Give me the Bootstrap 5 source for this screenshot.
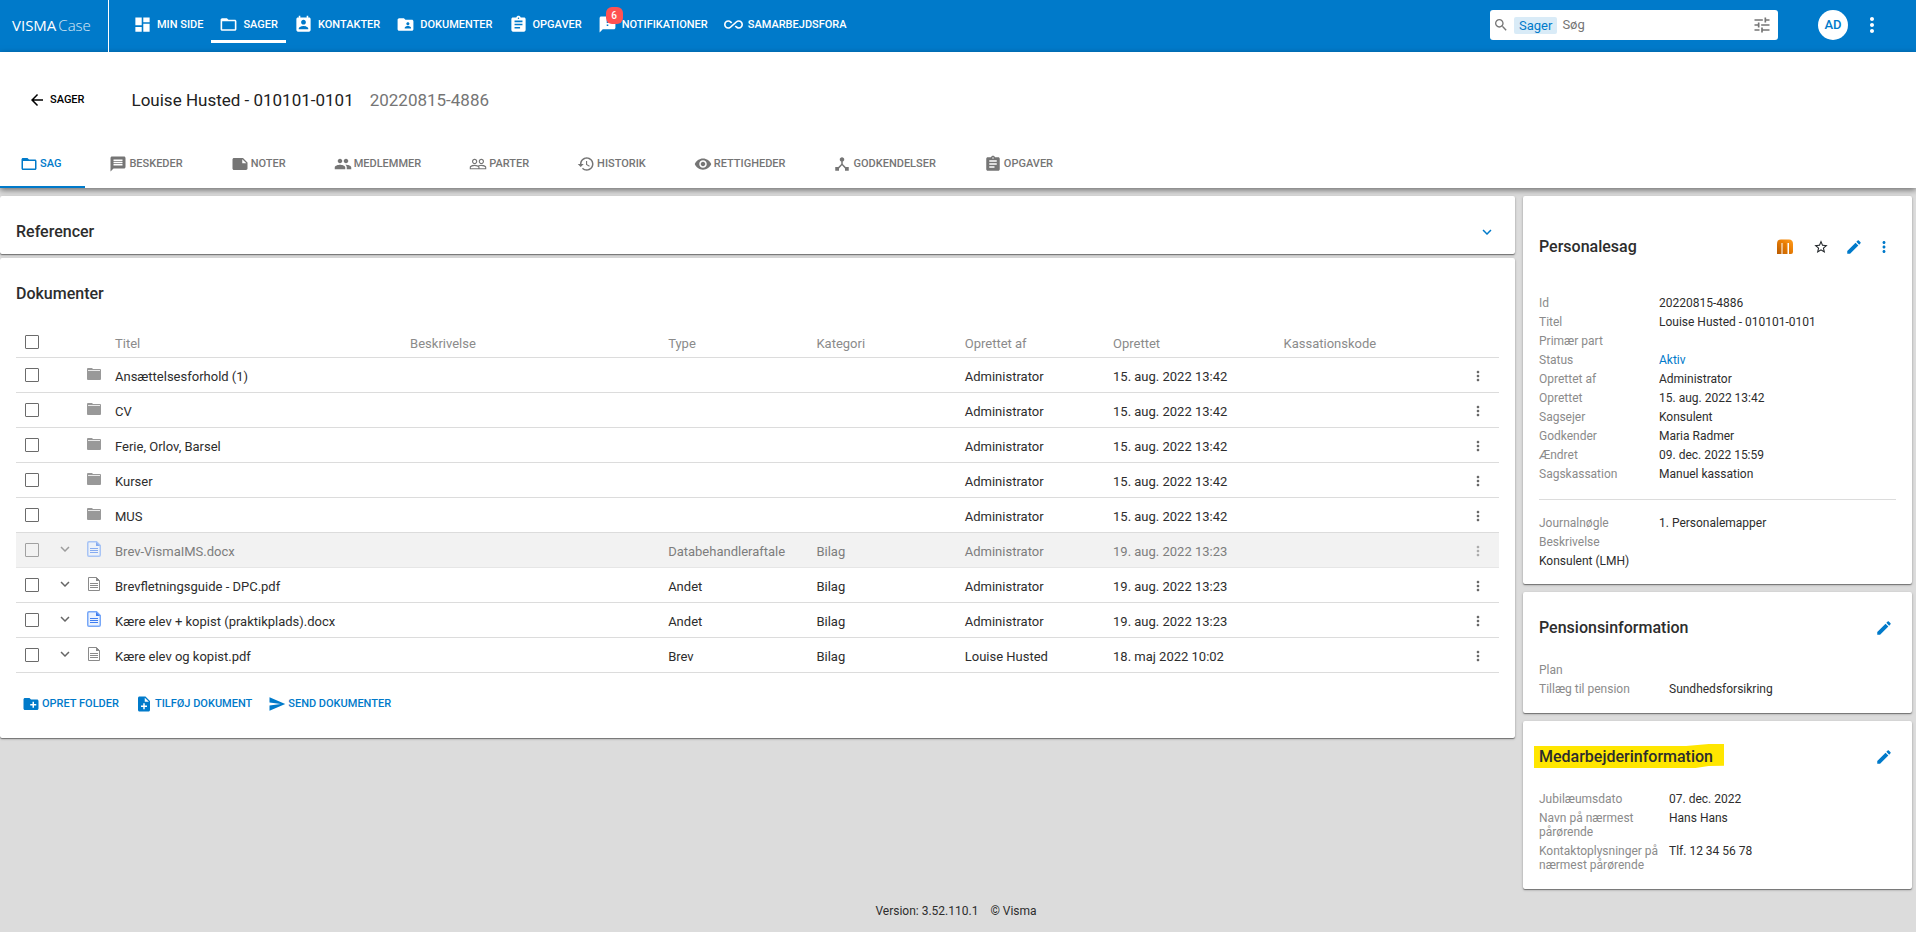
<!DOCTYPE html>
<html lang="da">
<head>
<meta charset="utf-8">
<meta name="viewport" content="width=device-width, initial-scale=1">
<title>Visma Case</title>
<link href="https://cdn.jsdelivr.net/npm/bootstrap@5.3.0/dist/css/bootstrap.min.css" rel="stylesheet">
<style>
:root { --brand: #007aca; --ink: #2d2d2d; --muted: #8b8b8b; --line: #dcdcdc; }
body { font-family: Roboto, "Liberation Sans", sans-serif; font-size: 13px; line-height: 18px; color: var(--ink); background: #dcdcdc; }
button { font: inherit; color: inherit; background: none; border: 0; padding: 0; }
.ico { width: 18px; height: 18px; fill: currentColor; flex: none; display: block; }
.ico-19 { width: 19px; height: 19px; }
.ico-20 { width: 20px; height: 20px; }
.ico-24 { width: 24px; height: 24px; }
.ico-16 { width: 16px; height: 16px; }
.ico-folder { width: 28px; height: 12px; }
.ico-file { width: 28px; height: 16px; }
.caps { font-size: 11px; font-weight: 500; text-transform: uppercase; text-decoration: none; white-space: nowrap; }
.text-brand { color: var(--brand); }

.topbar { background: var(--brand); height: 52px; }
.topbar .tools { padding: 10px 32px 0 0; }
.logo { width: 109px; height: 52px; border-right: 1px solid #fff; color: #fff; text-decoration: none; font: 400 15px/50px "Open Sans", sans-serif; padding-left: 12px; }
.logo span { font-weight: 300; opacity: .85; margin-left: 2px; }
.mainnav { padding-left: 16px; }
.mainnav a { color: #fff; height: 43px; padding: 9px 8px 0; gap: 5px; border-bottom: 3px solid transparent; position: relative; }
.mainnav a.active { border-color: #fff; }
.count { position: absolute; left: 16px; top: 7px; width: 17px; height: 17px; border-radius: 6px; background: #ff5252; font-size: 10px; line-height: 17px; text-align: center; }
.searchbox { width: 288px; height: 30px; background: #fff; border-radius: 3px; padding: 0 6px 0 3px; color: #757575; }
.searchbox .chip { background: #d9ebf7; color: var(--brand); border-radius: 2px; height: 17px; line-height: 17px; padding: 0 5px; margin-left: 5px; }
.searchbox input { border: 0; outline: 0; background: none; min-width: 0; padding: 0 5px; font-size: 13px; }
.searchbox input::placeholder { color: #757575; opacity: 1; }
.avatar { width: 30px; height: 30px; border-radius: 50%; background: #fff; color: var(--brand); font-size: 13px; font-weight: 500; margin: 0 12px 0 40px; }

.casehead { background: #fff; box-shadow: 0 2px 6px rgba(0,0,0,.5); }
.casehead .titlerow { height: 86px; padding: 10px 28px 0; }
.casehead h1 { font-size: 17px; line-height: 22px; font-weight: 400; margin: 0 0 0 47px; color: #212121; }
.casehead .caseno { font-size: 17px; line-height: 22px; color: #757575; margin-left: 16px; }
.tabs { height: 50px; }
.tabs a { color: #757575; padding: 4px 24px 0; gap: 2px; border-bottom: 2px solid transparent; }
.tabs a.active { color: var(--brand); padding-left: 20px; border-color: var(--brand); }

.board { display: grid; grid-template-columns: minmax(0, 1515fr) minmax(0, 389fr); column-gap: 8px; padding: 8px 4px 0 0; align-items: start; }
.panel { background: #fff; border-radius: 2px; box-shadow: 0 1px 1px rgba(0,0,0,.4), 0 1px 3px rgba(0,0,0,.2); padding: 0 16px 16px; }
.panel h2 { font-size: 16px; line-height: 20px; font-weight: 500; margin: 0; }
.panel-folded { padding-top: 26px; padding-bottom: 12px; }
.panel-case { padding-top: 41px; }
.panel-case .panel-head { margin-bottom: 39px; }
.panel-info { padding-top: 26px; padding-bottom: 17px; }
.panel-info .panel-head { margin-bottom: 25px; }
.panel-docs h2 { padding: 26px 0 24px; }
.panel-tools { margin-right: 3px; }

.docs { table-layout: fixed; min-width: 1000px; width: 100%; border-collapse: collapse; }
.docs tr { height: 35px; border-bottom: 1px solid var(--line); }
.docs th, .docs td { padding: 4px 8px 0; vertical-align: middle; overflow: hidden; white-space: nowrap; text-overflow: ellipsis; }
.docs th { font-weight: 400; color: var(--muted); }
.docs thead tr { height: 29px; }
.docs .pick { padding: 0 0 0 9px; }
.docs .mark-cell { padding: 0 0 2px; }
.docs .menu-cell { padding: 2px 2px 0 0; }
.docs .checked-out { background: #f2f2f2; border-color: #e6e6e6; }
.docs .checked-out > * > * { opacity: .6; }
.docs .checked-out td { color: #7d7d7d; }
.c-pick { width: 40px; } .c-open { width: 24px; } .c-icon { width: 27px; } .c-menu { width: 40px; }
.c-title { width: 19.9%; } .c-desc { width: 17.4%; } .c-std { width: 10%; } .c-date { width: 11.5%; }
.tick { appearance: none; width: 14px; height: 14px; border: 1px solid #6b6b6b; border-radius: 1px; margin: 0; display: block; background: #fff; }
.checked-out .tick { background: transparent; }
.tick:checked { background: var(--brand); }
.grey { color: #999; }
.dim { color: #666; }
.actions { gap: 16px; padding: 22px 6px 9px; color: var(--brand); }
.actions button { gap: 2px; }

.facts { display: grid; grid-template-columns: 120px minmax(0, 1fr); row-gap: 5px; font-size: 12px; line-height: 14px; margin: 0; }
.facts.wide { grid-template-columns: 130px minmax(0, 1fr); }
.facts dt { font-weight: 400; color: var(--muted); }
.facts dd { margin: 0; }
.facts a { color: var(--brand); text-decoration: none; }
.rule { border-top: 1px solid var(--line); margin: 18px 0 16px; }
.marker { position: relative; z-index: 0; }
.marker::before { content: ""; position: absolute; z-index: -1; inset: -3px -11px -1px -5px; background: #ffe600; clip-path: polygon(0 8%, 80% 8%, 92% 0, 100% 0, 100% 91%, 92% 92%, 85% 100%, 0 100%); }
footer { font-size: 12px; padding: 13px 4px 13px 0; gap: 12px; }
</style>
</head>
<body>
<svg class="d-none" xmlns="http://www.w3.org/2000/svg">
<symbol id="dashboard" viewBox="0 0 24 24"><path d="M3 13h8V3H3v10zm0 8h8v-6H3v6zm10 0h8V11h-8v10zm0-18v6h8V3h-8z"/></symbol>
<symbol id="folder-open" viewBox="0 0 24 24"><path d="M20 6h-8l-2-2H4c-1.1 0-1.99.9-1.99 2L2 18c0 1.1.9 2 2 2h16c1.1 0 2-.9 2-2V8c0-1.1-.9-2-2-2zm0 12H4V8h16v10z"/></symbol>
<symbol id="folder" viewBox="0 0 14 12"><path d="M1 0h4l1 1h7q1 0 1 1v9q0 1-1 1H1q-1 0-1-1V1q0-1 1-1z"/><path d="M1 2.5h12" stroke="#fff" stroke-width=".8"/></symbol>
<symbol id="contacts" viewBox="0 0 24 24"><path d="M19 3h-1V1h-2v2H8V1H6v2H5c-1.11 0-2 .9-2 2v14c0 1.1.89 2 2 2h14c1.1 0 2-.9 2-2V5c0-1.1-.9-2-2-2zm-7 3c1.66 0 3 1.34 3 3s-1.34 3-3 3-3-1.34-3-3 1.34-3 3-3zm6 12H6v-1c0-2 4-3.1 6-3.1s6 1.1 6 3.1v1z"/></symbol>
<symbol id="folder-shared" viewBox="0 0 24 24"><path d="M20 6h-8l-2-2H4c-1.1 0-1.99.9-1.99 2L2 18c0 1.1.9 2 2 2h16c1.1 0 2-.9 2-2V8c0-1.1-.9-2-2-2zm-5 3c1.1 0 2 .9 2 2s-.9 2-2 2-2-.9-2-2 .9-2 2-2zm4 8h-8v-1c0-1.33 2.67-2 4-2s4 .67 4 2v1z"/></symbol>
<symbol id="assignment" viewBox="0 0 24 24"><path d="M19 3h-4.18C14.4 1.84 13.3 1 12 1c-1.3 0-2.4.84-2.82 2H5c-1.1 0-2 .9-2 2v14c0 1.1.9 2 2 2h14c1.1 0 2-.9 2-2V5c0-1.1-.9-2-2-2zm-7 0c.55 0 1 .45 1 1s-.45 1-1 1-1-.45-1-1 .45-1 1-1zm2 14H7v-2h7v2zm3-4H7v-2h10v2zm0-4H7V7h10v2z"/></symbol>
<symbol id="feedback" viewBox="0 0 24 24"><path d="M20 2H4c-1.1 0-1.99.9-1.99 2L2 22l4-4h14c1.1 0 2-.9 2-2V4c0-1.1-.9-2-2-2zm-7 12h-2v-2h2v2zm0-4h-2V6h2v4z"/></symbol>
<symbol id="infinity" viewBox="0 0 24 24"><path d="M18.6 6.62c-1.44 0-2.8.56-3.77 1.53L12 10.66 10.48 12h.01L7.8 14.39c-.64.64-1.49.99-2.4.99-1.87 0-3.39-1.51-3.39-3.38S3.53 8.62 5.4 8.62c.91 0 1.76.35 2.44 1.03l1.13 1 1.51-1.34L9.22 8.2C8.2 7.18 6.84 6.62 5.4 6.62 2.42 6.62 0 9.04 0 12s2.42 5.38 5.4 5.38c1.44 0 2.8-.56 3.77-1.53l2.83-2.5.01.01L13.52 12h-.01l2.69-2.39c.64-.64 1.49-.99 2.4-.99 1.87 0 3.39 1.51 3.39 3.38s-1.52 3.38-3.39 3.38c-.9 0-1.76-.35-2.44-1.03l-1.14-1.01-1.51 1.34 1.27 1.12c1.02 1.01 2.37 1.57 3.82 1.57 2.98 0 5.4-2.41 5.4-5.38s-2.42-5.37-5.4-5.37z"/></symbol>
<symbol id="search" viewBox="0 0 24 24"><path d="M15.5 14h-.79l-.28-.27C15.41 12.59 16 11.11 16 9.5 16 5.91 13.09 3 9.5 3S3 5.91 3 9.5 5.91 16 9.5 16c1.61 0 3.09-.59 4.23-1.57l.27.28v.79l5 4.99L20.49 19l-4.99-5zm-6 0C7.01 14 5 11.99 5 9.5S7.01 5 9.5 5 14 7.01 14 9.5 11.99 14 9.5 14z"/></symbol>
<symbol id="tune" viewBox="0 0 24 24"><path d="M3 17v2h6v-2H3zM3 5v2h10V5H3zm10 16v-2h8v-2h-8v-2h-2v6h2zM7 9v2H3v2h4v2h2V9H7zm14 4v-2H11v2h10zm-6-4h2V7h4V5h-4V3h-2v6z"/></symbol>
<symbol id="more" viewBox="0 0 24 24"><path d="M12 8c1.1 0 2-.9 2-2s-.9-2-2-2-2 .9-2 2 .9 2 2 2zm0 2c-1.1 0-2 .9-2 2s.9 2 2 2 2-.9 2-2-.9-2-2-2zm0 6c-1.1 0-2 .9-2 2s.9 2 2 2 2-.9 2-2-.9-2-2-2z"/></symbol>
<symbol id="back" viewBox="0 0 24 24"><path d="M20 11H7.83l5.59-5.59L12 4l-8 8 8 8 1.41-1.41L7.83 13H20v-2z"/></symbol>
<symbol id="message" viewBox="0 0 24 24"><path d="M20 2H4c-1.1 0-1.99.9-1.99 2L2 22l4-4h14c1.1 0 2-.9 2-2V4c0-1.1-.9-2-2-2zm-2 12H6v-2h12v2zm0-3H6V9h12v2zm0-3H6V6h12v2z"/></symbol>
<symbol id="note" viewBox="0 0 24 24"><path d="M22 10l-6-6H4c-1.1 0-2 .9-2 2v12.01c0 1.1.9 1.99 2 1.99l16-.01c1.1 0 2-.89 2-1.99v-8zm-7-4.5l5.5 5.5H15V5.5z"/></symbol>
<symbol id="group" viewBox="0 0 24 24"><path d="M16 11c1.66 0 2.99-1.34 2.99-3S17.66 5 16 5c-1.66 0-3 1.34-3 3s1.34 3 3 3zm-8 0c1.66 0 2.99-1.34 2.99-3S9.66 5 8 5C6.34 5 5 6.34 5 8s1.34 3 3 3zm0 2c-2.33 0-7 1.17-7 3.5V19h14v-2.5c0-2.33-4.67-3.5-7-3.5zm8 0c-.29 0-.62.02-.97.05 1.16.84 1.97 1.97 1.97 3.45V19h6v-2.5c0-2.33-4.67-3.5-7-3.5z"/></symbol>
<symbol id="people" viewBox="0 0 24 24"><path d="M16.5 13c-1.2 0-3.07.34-4.5 1-1.43-.67-3.3-1-4.5-1C5.33 13 1 14.08 1 16.25V19h22v-2.75c0-2.17-4.33-3.25-6.5-3.25zm-4 4.5h-10v-1.25c0-.54 2.56-1.75 5-1.75s5 1.21 5 1.75v1.25zm9 0H14v-1.25c0-.46-.2-.86-.52-1.22.88-.3 1.96-.53 3.02-.53 2.44 0 5 1.21 5 1.75v1.25zM7.5 12c1.93 0 3.5-1.57 3.5-3.5S9.43 5 7.5 5 4 6.57 4 8.5 5.57 12 7.5 12zm0-5.5c1.1 0 2 .9 2 2s-.9 2-2 2-2-.9-2-2 .9-2 2-2zm9 5.5c1.93 0 3.5-1.57 3.5-3.5S18.43 5 16.5 5 13 6.57 13 8.5s1.57 3.5 3.5 3.5zm0-5.5c1.1 0 2 .9 2 2s-.9 2-2 2-2-.9-2-2 .9-2 2-2z"/></symbol>
<symbol id="history" viewBox="0 0 24 24"><path d="M13 3c-4.97 0-9 4.03-9 9H1l3.89 3.89.07.14L9 12H6c0-3.87 3.13-7 7-7s7 3.13 7 7-3.13 7-7 7c-1.93 0-3.68-.79-4.94-2.06l-1.42 1.42C8.27 19.99 10.51 21 13 21c4.97 0 9-4.03 9-9s-4.03-9-9-9zm-1 5v5l4.28 2.54.72-1.21-3.5-2.08V8H12z"/></symbol>
<symbol id="eye" viewBox="0 0 24 24"><path d="M12 4.5C7 4.5 2.73 7.61 1 12c1.73 4.39 6 7.5 11 7.5s9.27-3.11 11-7.5c-1.73-4.39-6-7.5-11-7.5zM12 17c-2.76 0-5-2.24-5-5s2.24-5 5-5 5 2.24 5 5-2.24 5-5 5zm0-8c-1.66 0-3 1.34-3 3s1.34 3 3 3 3-1.34 3-3-1.34-3-3-3z"/></symbol>
<symbol id="hub" viewBox="0 0 24 24"><path d="M17 16l-4-4V8.82C14.16 8.4 15 7.3 15 6c0-1.66-1.34-3-3-3S9 4.34 9 6c0 1.3.84 2.4 2 2.82V12l-4 4H3v5h5v-3.05l4-4.2 4 4.2V21h5v-5h-4z"/></symbol>
<symbol id="chevron" viewBox="0 0 24 24"><path d="M16.59 8.59L12 13.17 7.41 8.59 6 10l6 6 6-6z"/></symbol>
<symbol id="folder-add" viewBox="0 0 24 24"><path d="M20 6h-8l-2-2H4c-1.11 0-1.99.89-1.99 2L2 18c0 1.11.89 2 2 2h16c1.11 0 2-.89 2-2V8c0-1.11-.89-2-2-2zm-1 8h-3v3h-2v-3h-3v-2h3V9h2v3h3v2z"/></symbol>
<symbol id="file-add" viewBox="0 0 24 24"><path d="M14 2H6c-1.1 0-1.99.9-1.99 2L4 20c0 1.1.89 2 1.99 2H18c1.1 0 2-.9 2-2V8l-6-6zm2 14h-3v3h-2v-3H8v-2h3v-3h2v3h3v2zm-3-7V3.5L18.5 9H13z"/></symbol>
<symbol id="send" viewBox="0 0 24 24"><path d="M2.01 21L23 12 2.01 3 2 10l15 2-15 2z"/></symbol>
<symbol id="edit" viewBox="0 0 24 24"><path d="M3 17.25V21h3.75L17.81 9.94l-3.75-3.75L3 17.25zM20.71 7.04c.39-.39.39-1.02 0-1.41l-2.34-2.34c-.39-.39-1.02-.39-1.41 0l-1.83 1.83 3.75 3.75 1.83-1.83z"/></symbol>
<symbol id="star" viewBox="0 0 24 24"><path d="M22 9.24l-7.19-.62L12 2 9.19 8.63 2 9.24l5.46 4.73L5.82 21 12 17.27 18.18 21l-1.63-7.03L22 9.24zM12 15.4l-3.76 2.27 1-4.28-3.32-2.88 4.38-.38L12 6.1l1.71 4.04 4.38.38-3.32 2.88 1 4.28L12 15.4z"/></symbol>
<symbol id="pdf" viewBox="0 0 14 16"><path d="M1.5 1.5h8l3 3v10h-11z" fill="none" stroke="#8a8a8a"/><path d="M9 1l4 4H9z" fill="#8a8a8a"/><path d="M3 7.5h8M3 9.5h8M3 11.5h8" stroke="#8a8a8a"/></symbol>
<symbol id="docx" viewBox="0 0 14 16"><path d="M2 .75h7.500l3.750 3.750V14q0 1.250-1.250 1.250H2Q.75 15.250.75 14V2Q.75.75 2 .75z" fill="#eaf2ff" stroke="#77a7f8" stroke-width="1.500"/><path d="M9 1l4 4H9z" fill="#3f7df0"/><path d="M3 7.500h8M3 9.500h8M3 11.500h8" stroke="#3f7df0"/></symbol>
<symbol id="emblem" viewBox="0 0 16 16"><path d="M0 15V5Q0 .5 4 .5h8q4 0 4 4.500v8q0 2-2 2h-2V4h-1.500v11h-5V4H4.500v11z" fill="url(#amber)"/><path d="M8 4v11" stroke="#d97300"/></symbol>
</svg>
<svg width="0" height="0" class="position-absolute"><defs><linearGradient id="amber" x1="0" x2="1" y1="1" y2="0"><stop offset="0" stop-color="#b85a00"/><stop offset=".6" stop-color="#ec8006"/><stop offset="1" stop-color="#ff9d1e"/></linearGradient></defs></svg>

<header class="topbar d-flex align-items-start">
  <a class="logo" href="#">VISMA<span>Case</span></a>
  <nav class="mainnav d-flex" aria-label="Hovedmenu">
    <a class="caps d-flex align-items-center" href="#"><svg class="ico ico-19"><use href="#dashboard"/></svg>Min side</a>
    <a class="caps d-flex align-items-center active" href="#"><svg class="ico ico-19"><use href="#folder-open"/></svg>Sager</a>
    <a class="caps d-flex align-items-center" href="#"><svg class="ico ico-19"><use href="#contacts"/></svg>Kontakter</a>
    <a class="caps d-flex align-items-center" href="#"><svg class="ico ico-19"><use href="#folder-shared"/></svg>Dokumenter</a>
    <a class="caps d-flex align-items-center" href="#"><svg class="ico ico-19"><use href="#assignment"/></svg>Opgaver</a>
    <a class="caps d-flex align-items-center" href="#"><svg class="ico ico-19"><use href="#feedback"/></svg>Notifikationer<span class="count">6</span></a>
    <a class="caps d-flex align-items-center" href="#"><svg class="ico ico-19"><use href="#infinity"/></svg>Samarbejdsfora</a>
  </nav>
  <div class="tools d-flex align-items-center ms-auto">
    <form class="searchbox d-flex align-items-center">
      <svg class="ico ico-16"><use href="#search"/></svg>
      <label class="chip" for="q">Sager</label>
      <input class="flex-grow-1" id="q" type="text" placeholder="Søg">
      <button type="button" aria-label="Filtre"><svg class="ico ico-20"><use href="#tune"/></svg></button>
    </form>
    <button class="avatar" type="button">AD</button>
    <button type="button" aria-label="Mere"><svg class="ico ico-24 text-white"><use href="#more"/></svg></button>
  </div>
</header>

<section class="casehead">
  <div class="titlerow d-flex align-items-center">
    <a class="caps d-flex align-items-center text-black gap-1" href="#"><svg class="ico"><use href="#back"/></svg>Sager</a>
    <h1>Louise Husted - 010101-0101</h1>
    <span class="caseno">20220815-4886</span>
  </div>
  <nav class="tabs d-flex" aria-label="Sag">
    <a class="caps d-flex align-items-center active" href="#"><svg class="ico"><use href="#folder-open"/></svg>Sag</a>
    <a class="caps d-flex align-items-center" href="#"><svg class="ico"><use href="#message"/></svg>Beskeder</a>
    <a class="caps d-flex align-items-center" href="#"><svg class="ico"><use href="#note"/></svg>Noter</a>
    <a class="caps d-flex align-items-center" href="#"><svg class="ico"><use href="#group"/></svg>Medlemmer</a>
    <a class="caps d-flex align-items-center" href="#"><svg class="ico"><use href="#people"/></svg>Parter</a>
    <a class="caps d-flex align-items-center" href="#"><svg class="ico"><use href="#history"/></svg>Historik</a>
    <a class="caps d-flex align-items-center" href="#"><svg class="ico"><use href="#eye"/></svg>Rettigheder</a>
    <a class="caps d-flex align-items-center" href="#"><svg class="ico"><use href="#hub"/></svg>Godkendelser</a>
    <a class="caps d-flex align-items-center" href="#"><svg class="ico"><use href="#assignment"/></svg>Opgaver</a>
  </nav>
</section>

<main class="board">
  <div class="d-flex flex-column gap-1">
    <section class="panel panel-folded d-flex align-items-center justify-content-between">
      <h2>Referencer</h2>
      <button type="button" class="panel-tools text-brand" aria-label="Fold ud"><svg class="ico"><use href="#chevron"/></svg></button>
    </section>
    <section class="panel panel-docs">
      <h2>Dokumenter</h2>
      <div class="table-responsive">
      <table class="docs">
        <colgroup><col class="c-pick"><col class="c-open"><col class="c-icon"><col class="c-title"><col class="c-desc"><col class="c-std"><col class="c-std"><col class="c-std"><col class="c-date"><col><col class="c-menu"></colgroup>
        <thead><tr>
          <th class="pick"><input class="tick" type="checkbox" aria-label="Vælg alle"></th><th></th><th></th>
          <th>Titel</th><th>Beskrivelse</th><th>Type</th><th>Kategori</th><th>Oprettet af</th><th>Oprettet</th><th>Kassationskode</th><th></th>
        </tr></thead>
        <tbody id="rows"></tbody>
      </table>
      </div>
      <div class="actions d-flex">
        <button type="button" class="caps d-flex align-items-center"><svg class="ico"><use href="#folder-add"/></svg>Opret folder</button>
        <button type="button" class="caps d-flex align-items-center"><svg class="ico"><use href="#file-add"/></svg>Tilføj dokument</button>
        <button type="button" class="caps d-flex align-items-center"><svg class="ico"><use href="#send"/></svg>Send dokumenter</button>
      </div>
    </section>
  </div>

  <aside class="d-flex flex-column gap-2">
    <section class="panel panel-case">
      <div class="panel-head d-flex align-items-center">
        <h2 class="me-auto">Personalesag</h2>
        <div class="panel-tools d-flex align-items-center text-brand">
          <button type="button" style="margin-right:20px" aria-label="Momentum"><svg class="ico ico-16"><use href="#emblem"/></svg></button>
          <button type="button" class="text-dark me-3" aria-label="Favorit"><svg class="ico ico-16"><use href="#star"/></svg></button>
          <button type="button" style="margin-right:12px" aria-label="Rediger"><svg class="ico"><use href="#edit"/></svg></button>
          <button type="button" aria-label="Mere"><svg class="ico"><use href="#more"/></svg></button>
        </div>
      </div>
      <dl class="facts">
        <dt>Id</dt><dd>20220815-4886</dd>
        <dt>Titel</dt><dd>Louise Husted - 010101-0101</dd>
        <dt>Primær part</dt><dd></dd>
        <dt>Status</dt><dd><a href="#">Aktiv</a></dd>
        <dt>Oprettet af</dt><dd>Administrator</dd>
        <dt>Oprettet</dt><dd>15. aug. 2022 13:42</dd>
        <dt>Sagsejer</dt><dd>Konsulent</dd>
        <dt>Godkender</dt><dd>Maria Radmer</dd>
        <dt>Ændret</dt><dd>09. dec. 2022 15:59</dd>
        <dt>Sagskassation</dt><dd>Manuel kassation</dd>
      </dl>
      <div class="rule"></div>
      <dl class="facts">
        <dt>Journalnøgle</dt><dd>1. Personalemapper</dd>
        <dt>Beskrivelse</dt><dd></dd>
        <dd>Konsulent (LMH)</dd>
      </dl>
    </section>
    <section class="panel panel-info">
      <div class="panel-head d-flex align-items-center justify-content-between">
        <h2>Pensionsinformation</h2>
        <button type="button" class="panel-tools text-brand" aria-label="Rediger"><svg class="ico"><use href="#edit"/></svg></button>
      </div>
      <dl class="facts wide">
        <dt>Plan</dt><dd></dd>
        <dt>Tillæg til pension</dt><dd>Sundhedsforsikring</dd>
      </dl>
    </section>
    <section class="panel panel-info">
      <div class="panel-head d-flex align-items-center justify-content-between">
        <h2 class="marker">Medarbejderinformation</h2>
        <button type="button" class="panel-tools text-brand" aria-label="Rediger"><svg class="ico"><use href="#edit"/></svg></button>
      </div>
      <dl class="facts wide">
        <dt>Jubilæumsdato</dt><dd>07. dec. 2022</dd>
        <dt>Navn på nærmest pårørende</dt><dd>Hans Hans</dd>
        <dt>Kontaktoplysninger på nærmest pårørende</dt><dd>Tlf. 12 34 56 78</dd>
      </dl>
    </section>
  </aside>
</main>
<footer class="d-flex justify-content-center"><span>Version: 3.52.110.1</span><span>© Visma</span></footer>

<script src="https://cdn.jsdelivr.net/npm/bootstrap@5.3.0/dist/js/bootstrap.bundle.min.js"></script>
<script>
const A = 'Administrator', D = '15. aug. 2022 13:42', E = '19. aug. 2022 13:23';
const docs = [
  ['folder', 'Ansættelsesforhold (1)', '', '', A, D],
  ['folder', 'CV', '', '', A, D],
  ['folder', 'Ferie, Orlov, Barsel', '', '', A, D],
  ['folder', 'Kurser', '', '', A, D],
  ['folder', 'MUS', '', '', A, D],
  ['docx', 'Brev-VismaIMS.docx', 'Databehandleraftale', 'Bilag', A, E, true],
  ['pdf', 'Brevfletningsguide - DPC.pdf', 'Andet', 'Bilag', A, E],
  ['docx', 'Kære elev + kopist (praktikplads).docx', 'Andet', 'Bilag', A, E],
  ['pdf', 'Kære elev og kopist.pdf', 'Brev', 'Bilag', 'Louise Husted', '18. maj 2022 10:02']
];
document.getElementById('rows').innerHTML = docs.map(([icon, title, type, cat, by, date, out]) => `
  <tr class="${out ? 'checked-out' : ''}">
    <td class="pick"><input class="tick" type="checkbox" aria-label="Vælg ${title}"></td>
    <td class="mark-cell">${icon === 'folder' ? '' : '<button type="button" class="dim d-block" aria-label="Fold ud"><svg class="ico"><use href="#chevron"/></svg></button>'}</td>
    <td class="mark-cell grey"><svg class="ico ${icon === 'folder' ? 'ico-folder' : 'ico-file'}"><use href="#${icon}"/></svg></td>
    <td>${title}</td><td></td><td>${type}</td><td>${cat}</td><td>${by}</td><td>${date}</td><td></td>
    <td class="menu-cell dim"><button type="button" class="d-block mx-auto" aria-label="Mere"><svg class="ico ico-16"><use href="#more"/></svg></button></td>
  </tr>`).join('');
</script>
</body>
</html>
